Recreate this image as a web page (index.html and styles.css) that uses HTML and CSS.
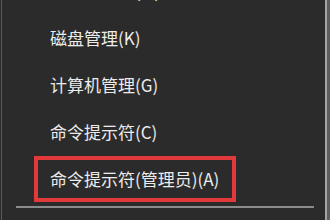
FILE: index.html
```html
<!DOCTYPE html>
<html lang="zh-CN">
<head>
    <meta charset="UTF-8">
    <title>Win+X 菜单</title>
    <link rel="stylesheet" href="styles.css">
</head>
<body>
    <div class="menu">
        <div class="menu-item">设备管理器(M)</div>
        <div class="menu-item">磁盘管理(K)</div>
        <div class="menu-item">计算机管理(G)</div>
        <div class="menu-item">命令提示符(C)</div>
        <div class="menu-item marked">
            <span class="mark-box">命令提示符(管理员)(A)</span>
        </div>
        <div class="separator"></div>
    </div>
</body>
</html>
```

FILE: styles.css
```css
* {
    margin: 0;
    padding: 0;
    box-sizing: border-box;
}

body {
    width: 330px;
    height: 220px;
    overflow: hidden;
    background: #5e5e5e;
    font-family: "Noto Sans CJK SC", "Noto Sans", sans-serif;
}

.menu {
    width: 327px;
    height: 253px;
    margin-top: -33px;
    background: #2b2b2b;
    border-left: 1px solid #2b2b2b;
    border-right: 2px solid #a4a4a4;
    box-shadow: inset 1px 0 0 #5a5a5a;
    padding-left: 2px;
}

.menu-item {
    height: 47px;
    line-height: 47px;
    padding-left: 47px;
    color: #ececec;
    font-size: 17px;
    white-space: nowrap;
}

.menu-item.marked {
    padding-left: 31px;
}

.mark-box {
    display: inline-block;
    height: 46px;
    line-height: 38px;
    padding: 0 13px 0 12px;
    border: 4px solid #e23a3a;
}

.separator {
    height: 2px;
    margin: 4px 11px 0 13px;
    background: #8c8c8c;
}
```
